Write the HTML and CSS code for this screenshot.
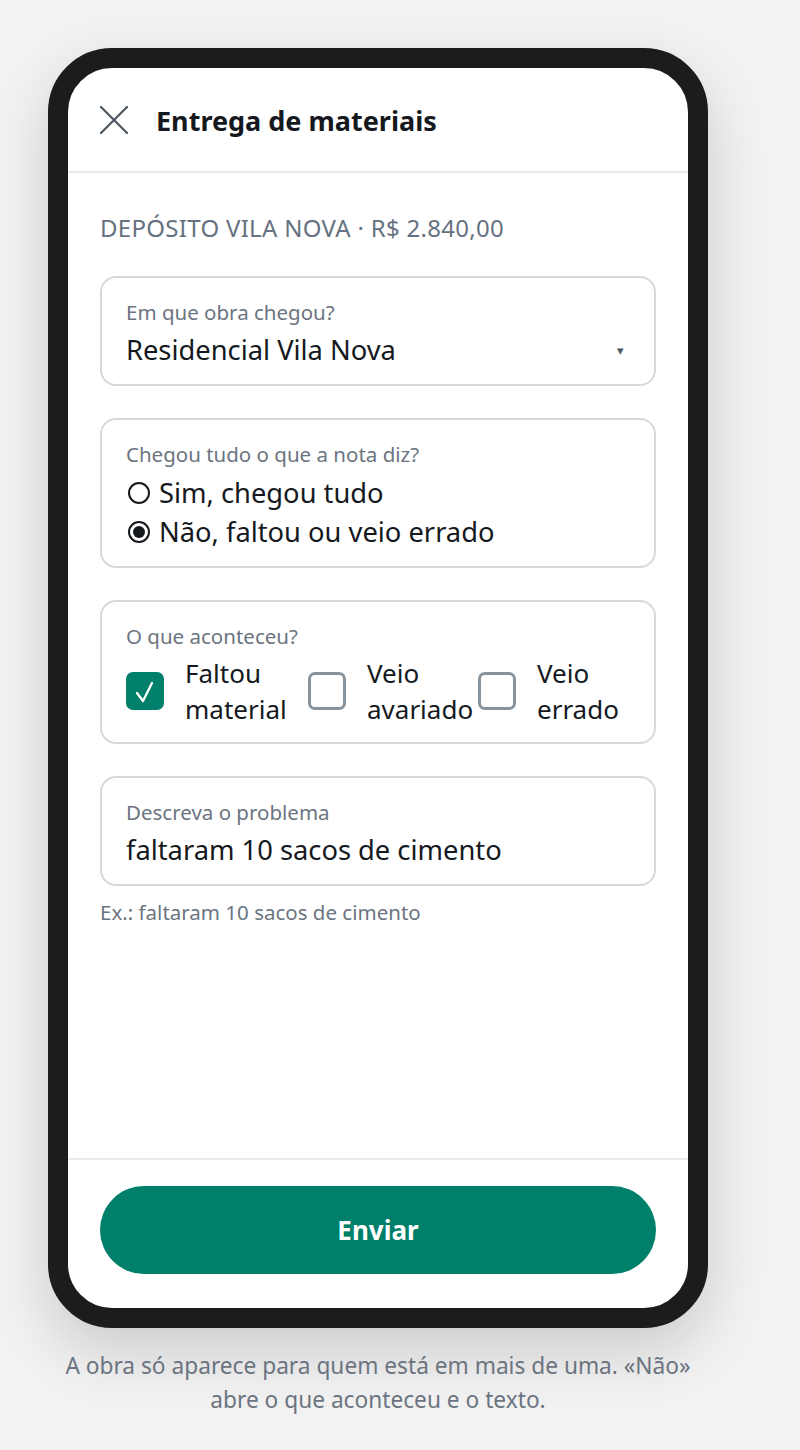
FILE: index.html
```html
<!DOCTYPE html>
<html lang="pt-BR">
<head>
<meta charset="utf-8">
<title>Entrega de materiais</title>
<link rel="stylesheet" href="styles.css">
</head>
<body>
<div class="page">
  <div class="phone">
    <header class="header">
      <svg class="close" width="28" height="28" viewBox="0 0 28 28" aria-hidden="true">
        <path d="M1 1 L27 27 M27 1 L1 27" stroke="#4b5660" stroke-width="2.2" fill="none" stroke-linecap="round"/>
      </svg>
      <h1 class="title">Entrega de materiais</h1>
    </header>
    <main class="content">
      <p class="supplier">DEPÓSITO VILA NOVA · R$ 2.840,00</p>

      <section class="card">
        <div class="label">Em que obra chegou?</div>
        <div class="select">
          <span class="value">Residencial Vila Nova</span>
          <span class="caret">▾</span>
        </div>
      </section>

      <section class="card">
        <div class="label">Chegou tudo o que a nota diz?</div>
        <div class="radio-row"><span class="radio"></span><span class="value">Sim, chegou tudo</span></div>
        <div class="radio-row"><span class="radio radio-on"></span><span class="value">Não, faltou ou veio errado</span></div>
      </section>

      <section class="card">
        <div class="label">O que aconteceu?</div>
        <div class="checks">
          <div class="check-item">
            <span class="box box-on">
              <svg width="32" height="32" viewBox="0 0 32 32" aria-hidden="true">
                <path d="M8 18 L14 26 L23 8" stroke="#ffffff" stroke-width="2.3" fill="none" stroke-linecap="round" stroke-linejoin="round"/>
              </svg>
            </span>
            <span class="check-text">Faltou material</span>
          </div>
          <div class="check-item">
            <span class="box"></span>
            <span class="check-text">Veio avariado</span>
          </div>
          <div class="check-item">
            <span class="box"></span>
            <span class="check-text">Veio errado</span>
          </div>
        </div>
      </section>

      <section class="card">
        <div class="label">Descreva o problema</div>
        <div class="value-line">faltaram 10 sacos de cimento</div>
      </section>
      <p class="hint">Ex.: faltaram 10 sacos de cimento</p>
    </main>
    <footer class="footer">
      <button class="submit" type="button">Enviar</button>
    </footer>
  </div>
  <p class="caption">A obra só aparece para quem está em mais de uma. «Não» abre o que aconteceu e o texto.</p>
</div>
</body>
</html>
```

FILE: styles.css
```css
* { box-sizing: border-box; }

html, body {
  margin: 0;
  padding: 0;
  background: #f2f2f2;
}

body {
  font-family: "Noto Sans", "Open Sans", sans-serif;
  color: #15191e;
}

.page {
  padding: 48px;
  width: 756px;
}

.phone {
  width: 660px;
  height: 1280px;
  border: 20px solid #1c1c1e;
  border-radius: 64px;
  background: #ffffff;
  box-shadow: 0 24px 60px rgba(0, 0, 0, 0.16);
  display: flex;
  flex-direction: column;
  overflow: hidden;
}

.header {
  height: 105px;
  flex: none;
  display: flex;
  align-items: center;
  gap: 28px;
  padding: 1px 32px 0;
  border-bottom: 2px solid #e7ebef;
}

.close { flex: none; }

.title {
  margin: 0;
  font-size: 27px;
  font-weight: 700;
  color: #15191e;
}

.content {
  flex: 1;
  padding: 38px 32px 0;
}

.supplier {
  margin: 0 0 32px;
  font-size: 24px;
  letter-spacing: 0.3px;
  line-height: 33px;
  color: #66727f;
}

.card {
  border: 2px solid #d5d9de;
  border-radius: 16px;
  padding: 20px 24px 15px;
  margin-bottom: 32px;
}

.label {
  font-size: 20.5px;
  line-height: 28px;
  color: #6b7480;
  margin-bottom: 5px;
}

.select {
  display: flex;
  align-items: center;
  justify-content: space-between;
  height: 38px;
}

.value, .value-line {
  font-size: 27.3px;
  line-height: 38px;
  color: #15191e;
}

.caret {
  font-size: 13px;
  color: #4b5563;
  margin-right: 6px;
}

.radio-row {
  display: flex;
  align-items: center;
  gap: 9px;
  padding-left: 2px;
  height: 39px;
}

.radio {
  width: 22px;
  height: 22px;
  border: 2px solid #15191e;
  border-radius: 50%;
  flex: none;
  position: relative;
}

.radio-on::after {
  content: "";
  position: absolute;
  inset: 3px;
  border-radius: 50%;
  background: #15191e;
}

.checks {
  display: grid;
  grid-template-columns: 170px 158px 1fr;
  gap: 12px;
}

.check-item {
  display: flex;
  align-items: center;
  gap: 21px;
}

.box {
  width: 38px;
  height: 38px;
  flex: none;
  border: 3px solid #87939d;
  border-radius: 7px;
  display: flex;
  align-items: center;
  justify-content: center;
}

.box-on {
  background: #00806a;
  border-color: #00806a;
}

.check-text {
  font-size: 26px;
  line-height: 36px;
  color: #15191e;
}

.hint {
  margin: -20px 0 0;
  font-size: 20.5px;
  line-height: 28px;
  color: #6b7480;
}

.footer {
  flex: none;
  border-top: 2px solid #e7ebef;
  padding: 26px 32px 34px;
}

.submit {
  display: block;
  width: 100%;
  height: 88px;
  border: none;
  border-radius: 44px;
  background: #00806a;
  color: #ffffff;
  font-family: inherit;
  font-size: 26px;
  font-weight: 700;
}

.caption {
  width: 660px;
  margin: 21px 0 0;
  text-align: center;
  font-size: 22.7px;
  line-height: 34px;
  color: #6b7480;
}
```
